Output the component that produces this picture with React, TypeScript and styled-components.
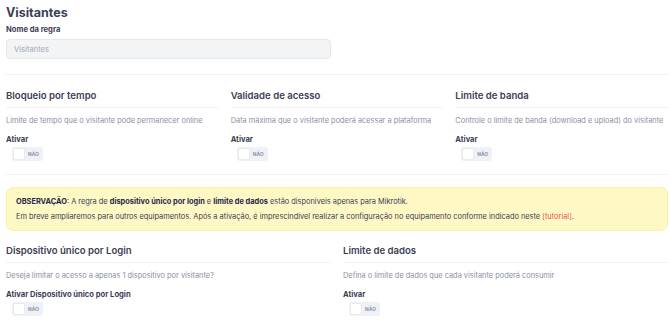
import React from "react";
import styled, { createGlobalStyle } from "styled-components";

const Global = createGlobalStyle`
  html, body { margin: 0; padding: 0; background: #fff; }
  body { font-family: Inter, "Noto Sans", sans-serif; color: #3f4254; }
  * { box-sizing: border-box; }
`;

const Page = styled.div`
  width: 670px;
  padding: 5px 2px 0 6px;
`;

const Title = styled.h1`
  margin: 0;
  font-size: 12.5px;
  font-weight: 700;
  line-height: 15px;
  color: #3b4056;
`;

const Label = styled.div<{ $mt?: number }>`
  font-size: 7.6px;
  font-weight: 700;
  color: #3b4056;
  line-height: 10px;
  margin-top: ${(p) => p.$mt ?? 0}px;
`;

const Input = styled.input`
  display: block;
  width: 325px;
  height: 20px;
  margin-top: 4px;
  padding: 0 7px;
  border: 1px solid #e6e8ec;
  border-radius: 4px;
  background: #f3f4f6;
  font-family: inherit;
  font-size: 7.6px;
  color: #9aa0ad;
  outline: none;
  &::placeholder { color: #a3a8b4; }
`;

const Divider = styled.hr<{ $mt: number }>`
  margin: ${(p) => p.$mt}px 0 0 -1px;
  border: 0;
  height: 1px;
  background: #f3f3f4;
`;

const Grid = styled.div<{ $mt: number }>`
  display: grid;
  grid-auto-flow: column;
  grid-auto-columns: 1fr;
  column-gap: 12px;
  margin-top: ${(p) => p.$mt}px;
`;

const Col = styled.div``;

const SectionTitle = styled.h2`
  margin: 0;
  font-size: 9.6px;
  font-weight: 600;
  line-height: 12px;
  color: #3b4056;
`;

const SectionRule = styled.div`
  height: 1px;
  background: #f1f2f4;
  margin-top: 5px;
`;

const Desc = styled.p`
  margin: 8px 0 0;
  font-size: 7.4px;
  line-height: 10px;
  color: #8a8fa0;
`;

const ToggleWrap = styled.div`
  margin: 2px 0 0 6px;
  width: 31px;
  height: 14px;
  border-radius: 3px;
  background: #eef1f8;
  display: flex;
  align-items: center;
  padding: 1px;
  gap: 3px;
`;

const Knob = styled.span`
  width: 12px;
  height: 12px;
  border-radius: 2px;
  background: #fff;
  border: 1px solid #e7eaf2;
`;

const ToggleText = styled.span`
  font-size: 4.8px;
  font-weight: 700;
  color: #8d93a6;
  letter-spacing: 0.1px;
`;

const Alert = styled.div`
  margin-top: 12px;
  width: 662px;
  background: #fef8c4;
  border: 1px solid #fcf0a6;
  border-radius: 7px;
  padding: 6px 9px;
  font-size: 7.4px;
  line-height: 15px;
  color: #3b4056;
`;

const Strong = styled.b`
  font-weight: 700;
  color: #1e2a4a;
`;

const Link = styled.span`
  color: #e8544e;
`;

const Toggle = () => (
  <ToggleWrap>
    <Knob />
    <ToggleText>NÃO</ToggleText>
  </ToggleWrap>
);

type Sec = { title: string; desc: string; label: string };

const top: Sec[] = [
  { title: "Bloqueio por tempo", desc: "Limite de tempo que o visitante pode permanecer online", label: "Ativar" },
  { title: "Validade de acesso", desc: "Data máxima que o visitante poderá acessar a plataforma", label: "Ativar" },
  { title: "Limite de banda", desc: "Controle o limite de banda (download e upload) do visitante", label: "Ativar" },
];

const bottom: Sec[] = [
  { title: "Dispositivo único por Login", desc: "Deseja limitar o acesso a apenas 1 dispositivo por visitante?", label: "Ativar Dispositivo único por Login" },
  { title: "Limite de dados", desc: "Defina o limite de dados que cada visitante poderá consumir", label: "Ativar" },
];

const Section = ({ s }: { s: Sec }) => (
  <Col>
    <SectionTitle>{s.title}</SectionTitle>
    <SectionRule />
    <Desc>{s.desc}</Desc>
    <Label $mt={9}>{s.label}</Label>
    <Toggle />
  </Col>
);

export default function App() {
  return (
    <>
      <Global />
      <Page>
        <Title>Visitantes</Title>
        <Label $mt={5}>Nome da regra</Label>
        <Input placeholder="Visitantes" readOnly />
        <Divider $mt={15} />
        <Grid $mt={15}>
          {top.map((s) => (
            <Section key={s.title} s={s} />
          ))}
        </Grid>
        <Divider $mt={13} />
        <Alert>
          <div>
            <Strong>OBSERVAÇÃO</Strong>: A regra de <Strong>dispositivo único por login</Strong> e{" "}
            <Strong>limite de dados</Strong> estão disponiveis apenas para Mikrotik.
          </div>
          <div>
            Em breve ampliaremos para outros equipamentos. Após a ativação, é imprescindivel realizar a configuração no
            equipamento conforme indicado neste <Link>[tutorial]</Link>.
          </div>
        </Alert>
        <Grid $mt={14}>
          {bottom.map((s) => (
            <Section key={s.title} s={s} />
          ))}
        </Grid>
      </Page>
    </>
  );
}
